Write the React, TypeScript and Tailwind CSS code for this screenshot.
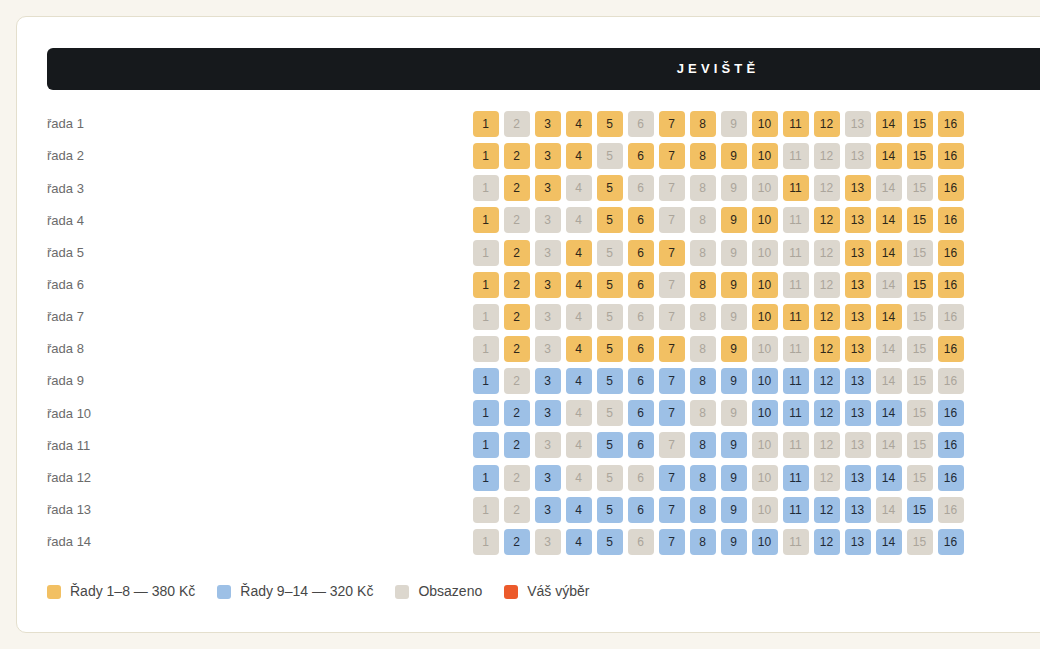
const yellowRows = [
  "YGYYYGYYGYYYGYYY",
  "YYYYGYYYYYGGGYYY",
  "GYYGYGGGGGYGYGGY",
  "YGGGYYGGYYGYYYYY",
  "GYGYGYYGGGGGYYGY",
  "YYYYYYGYYYGGYGYY",
  "GYGGGGGGGYYYYYGG",
  "GYGYYYYGYGGYYGGY",
];

const blueRows = [
  "BGBBBBBBBBBBBGGG",
  "BBBGGBBGGBBBBBGB",
  "BBGGBBGBBGGGGGGB",
  "BGBGGGBBBGBGBBGB",
  "GGBBBBBBBGBBBGBG",
  "GBGBBGBBBBGBBBGB",
];

const rows = [...yellowRows, ...blueRows];

function Seat({ n, kind }: { n: number; kind: string }) {
  const base =
    "flex h-[26px] w-[26px] items-center justify-center rounded-[4px] text-[12px]";
  if (kind === "Y")
    return <div className={`${base} bg-[#f2c063] text-[#2d2619]`}>{n}</div>;
  if (kind === "B")
    return <div className={`${base} bg-[#9dc0e6] text-[#1f2a36]`}>{n}</div>;
  return <div className={`${base} bg-[#dcd7ce] text-[#aba59b]`}>{n}</div>;
}

function LegendItem({ color, label }: { color: string; label: string }) {
  return (
    <div className="flex items-center gap-[9px]">
      <span className={`h-[14px] w-[14px] rounded-[3px] ${color}`} />
      <span>{label}</span>
    </div>
  );
}

export default function App() {
  return (
    <div
      className="min-h-screen overflow-hidden bg-[#f8f5ee] p-4"
      style={{ fontFamily: "'Liberation Sans', Arial, sans-serif" }}
    >
      <div className="w-[1404px] rounded-[10px] border border-[#e4dfcd] bg-white px-[30px] pt-[31px] pb-[30px]">
        <div className="flex h-[42px] items-center justify-center rounded-[6px] bg-[#16191c] text-[13px] font-bold tracking-[0.32em] text-white">
          JEVIŠTĚ
        </div>

        <div className="mt-[21px] flex flex-col gap-y-[6.15px]">
          {rows.map((r, i) => (
            <div key={i} className="grid grid-cols-[1fr_auto_1fr] items-center">
              <span className="text-[13px] text-[#6b6b6b]">řada {i + 1}</span>
              <div className="flex gap-[5px]">
                {r.split("").map((k, j) => (
                  <Seat key={j} n={j + 1} kind={k} />
                ))}
              </div>
              <span />
            </div>
          ))}
        </div>

        <div className="mt-[27px] flex h-5 items-center gap-[22px] text-[14px] text-[#474747]">
          <LegendItem color="bg-[#f2c063]" label="Řady 1–8 — 380 Kč" />
          <LegendItem color="bg-[#9dc0e6]" label="Řady 9–14 — 320 Kč" />
          <LegendItem color="bg-[#dcd7ce]" label="Obsazeno" />
          <LegendItem color="bg-[#ec5a2b]" label="Váš výběr" />
        </div>
      </div>
    </div>
  );
}
